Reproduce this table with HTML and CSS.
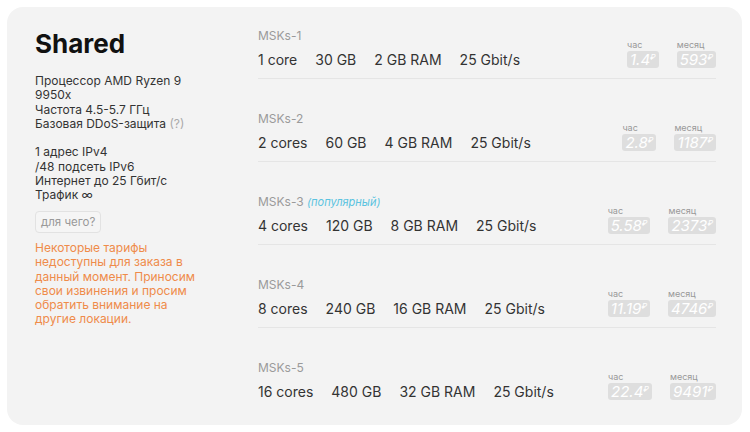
FILE: index.html
```html
<!DOCTYPE html>
<html lang="ru">
<head>
  <meta charset="UTF-8">
  <title>Shared</title>
  <link rel="stylesheet" href="styles.css">
</head>
<body>

  <div class="card">
    <div class="info">
      <h1>Shared</h1>
      <p>Процессор AMD Ryzen 9 9950x<br>Частота 4.5-5.7 ГГц<br>Базовая DDoS-защита <span class="hint">(?)</span></p>
      <p>1 адрес IPv4<br>/48 подсеть IPv6<br>Интернет до 25 Гбит/с<br>Трафик ∞</p>
      <button class="why">для чего?</button>
      <p class="warn">Некоторые тарифы недоступны для заказа в данный момент. Приносим свои извинения и просим обратить внимание на другие локации.</p>
    </div>

    <div class="plans">
      <div class="plan">
        <div class="specs">
          <div class="name">MSKs-1</div>
          <div class="line"><span>1 core</span><span>30 GB</span><span>2 GB RAM</span><span>25 Gbit/s</span></div>
        </div>
        <div class="prices">
          <div class="price"><span class="label">час</span><span class="box">1.4<sup>₽</sup></span></div>
          <div class="price"><span class="label">месяц</span><span class="box">593<sup>₽</sup></span></div>
        </div>
      </div>

      <div class="plan">
        <div class="specs">
          <div class="name">MSKs-2</div>
          <div class="line"><span>2 cores</span><span>60 GB</span><span>4 GB RAM</span><span>25 Gbit/s</span></div>
        </div>
        <div class="prices">
          <div class="price"><span class="label">час</span><span class="box">2.8<sup>₽</sup></span></div>
          <div class="price"><span class="label">месяц</span><span class="box">1187<sup>₽</sup></span></div>
        </div>
      </div>

      <div class="plan">
        <div class="specs">
          <div class="name">MSKs-3 <em class="popular">(популярный)</em></div>
          <div class="line"><span>4 cores</span><span>120 GB</span><span>8 GB RAM</span><span>25 Gbit/s</span></div>
        </div>
        <div class="prices">
          <div class="price"><span class="label">час</span><span class="box">5.58<sup>₽</sup></span></div>
          <div class="price"><span class="label">месяц</span><span class="box">2373<sup>₽</sup></span></div>
        </div>
      </div>

      <div class="plan">
        <div class="specs">
          <div class="name">MSKs-4</div>
          <div class="line"><span>8 cores</span><span>240 GB</span><span>16 GB RAM</span><span>25 Gbit/s</span></div>
        </div>
        <div class="prices">
          <div class="price"><span class="label">час</span><span class="box">11.19<sup>₽</sup></span></div>
          <div class="price"><span class="label">месяц</span><span class="box">4746<sup>₽</sup></span></div>
        </div>
      </div>

      <div class="plan last">
        <div class="specs">
          <div class="name">MSKs-5</div>
          <div class="line"><span>16 cores</span><span>480 GB</span><span>32 GB RAM</span><span>25 Gbit/s</span></div>
        </div>
        <div class="prices">
          <div class="price"><span class="label">час</span><span class="box">22.4<sup>₽</sup></span></div>
          <div class="price"><span class="label">месяц</span><span class="box">9491<sup>₽</sup></span></div>
        </div>
      </div>
    </div>
  </div>

</body>
</html>
```

FILE: styles.css
```css
body {
  margin: 0;
  background: #fff;
  font-family: Inter, "Noto Sans", sans-serif;
  color: #333;
}
.card {
  margin: 7px 8px 7px 7px;
  height: 418px;
  box-sizing: border-box;
  padding: 21px 26px 0 28px;
  background: #f3f3f3;
  border-radius: 16px;
  display: flex;
}
.info {
  width: 162px;
  margin-right: 61px;
  font-size: 12px;
  line-height: 14.3px;
}
.info h1 {
  margin: 0 0 14px;
  font-size: 26px;
  line-height: 32px;
  font-weight: 700;
  color: #111;
}
.info p {
  margin: 0 0 14.3px;
}
.hint {
  color: #aaa;
}
.why {
  display: block;
  height: 22px;
  padding: 0 5px;
  margin: -6px 0 8px;
  font-family: inherit;
  font-size: 11.5px;
  color: #999;
  background: #f5f5f5;
  border: 1px solid #e2e2e2;
  border-radius: 4px;
}
.info p.warn {
  color: #ef8b4a;
}
.plans {
  flex: 1;
}
.plan {
  display: flex;
  align-items: flex-end;
  justify-content: space-between;
  padding-bottom: 8px;
  margin-bottom: 32px;
  border-bottom: 1px solid #e5e5e5;
}
.plan.last {
  border-bottom: none;
}
.name {
  font-size: 12px;
  line-height: 16px;
  color: #9a9a9a;
  margin-bottom: 6px;
}
.popular {
  font-size: 11px;
  color: #5bc3e0;
}
.line {
  display: flex;
  gap: 18px;
  font-size: 14px;
  line-height: 20px;
  color: #333;
}
.prices {
  display: flex;
  gap: 18px;
  margin-bottom: 2px;
}
.price {
  display: flex;
  flex-direction: column;
  align-items: flex-start;
}
.label {
  font-size: 9px;
  line-height: 11px;
  color: #999;
  margin-bottom: 1px;
}
.box {
  height: 17px;
  line-height: 17px;
  padding: 0 3px;
  font-size: 15px;
  font-style: italic;
  color: #fff;
  background: #dedede;
  border-radius: 3px;
}
.box sup {
  font-size: 8px;
  vertical-align: 5px;
  line-height: 0;
}
```
